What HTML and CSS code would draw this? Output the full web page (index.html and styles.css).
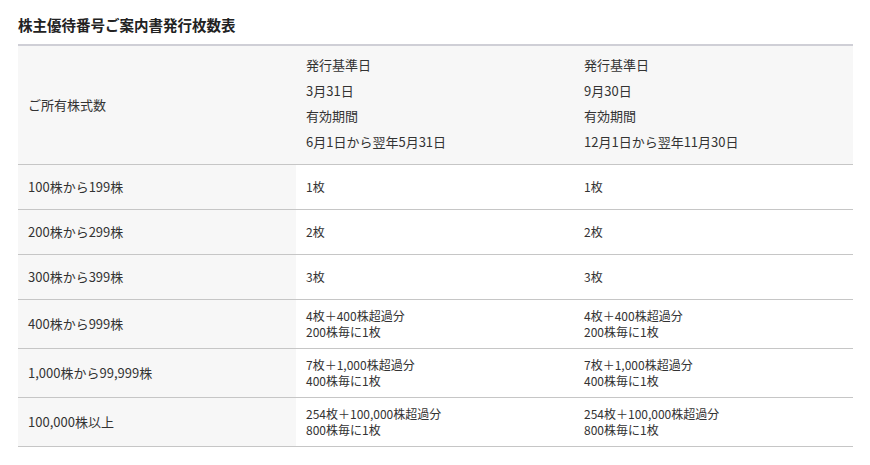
FILE: index.html
```html
<!DOCTYPE html>
<html lang="ja">
<head>
<meta charset="utf-8">
<title>株主優待番号ご案内書発行枚数表</title>
<link rel="stylesheet" href="styles.css">
</head>
<body>
<div class="page">
  <h2 class="title">株主優待番号ご案内書発行枚数表</h2>
  <table class="issue-table">
    <colgroup>
      <col class="col-a">
      <col class="col-b">
      <col class="col-c">
    </colgroup>
    <thead>
      <tr class="head-row">
        <th class="label">ご所有株式数</th>
        <th class="head-cell">
          <p>発行基準日</p>
          <p>3月31日</p>
          <p>有効期間</p>
          <p>6月1日から翌年5月31日</p>
        </th>
        <th class="head-cell">
          <p>発行基準日</p>
          <p>9月30日</p>
          <p>有効期間</p>
          <p>12月1日から翌年11月30日</p>
        </th>
      </tr>
    </thead>
    <tbody>
      <tr>
        <th class="label">100株から199株</th>
        <td>1枚</td>
        <td>1枚</td>
      </tr>
      <tr>
        <th class="label">200株から299株</th>
        <td>2枚</td>
        <td>2枚</td>
      </tr>
      <tr>
        <th class="label">300株から399株</th>
        <td>3枚</td>
        <td>3枚</td>
      </tr>
      <tr>
        <th class="label">400株から999株</th>
        <td>4枚＋400株超過分<br>200株毎に1枚</td>
        <td>4枚＋400株超過分<br>200株毎に1枚</td>
      </tr>
      <tr>
        <th class="label">1,000株から99,999株</th>
        <td>7枚＋1,000株超過分<br>400株毎に1枚</td>
        <td>7枚＋1,000株超過分<br>400株毎に1枚</td>
      </tr>
      <tr>
        <th class="label">100,000株以上</th>
        <td>254枚＋100,000株超過分<br>800株毎に1枚</td>
        <td>254枚＋100,000株超過分<br>800株毎に1枚</td>
      </tr>
    </tbody>
  </table>
</div>
</body>
</html>
```

FILE: styles.css
```css
html, body {
  margin: 0;
  padding: 0;
  background: #ffffff;
}

body {
  font-family: "Noto Sans CJK JP", "Noto Sans", sans-serif;
  color: #333333;
}

.page {
  padding: 15px 17px 0 18px;
}

.title {
  margin: 0 0 9px 0;
  font-size: 14.5px;
  line-height: 20px;
  font-weight: bold;
  color: #222222;
}

.issue-table {
  width: 835px;
  table-layout: fixed;
  border-collapse: collapse;
  border-top: 2px solid #cfcfd6;
}

.col-a { width: 278px; }
.col-b { width: 278px; }
.col-c { width: 279px; }

.issue-table tr {
  height: 45px;
  border-bottom: 1px solid #c6c6c6;
}

.issue-table th,
.issue-table td {
  text-align: left;
  vertical-align: middle;
  font-weight: normal;
  padding: 8px 10px;
  line-height: 16px;
}

.issue-table td {
  font-size: 12px;
  background: #ffffff;
}

.label {
  font-size: 13px;
  background: #f7f7f7;
  color: #333333;
}

.head-row {
  background: #f7f7f7;
}

.head-row .head-cell {
  font-size: 13px;
  padding: 6px 10px 10px 10px;
  background: #f7f7f7;
}

.head-cell p {
  margin: 0;
  line-height: 25.5px;
}
```
